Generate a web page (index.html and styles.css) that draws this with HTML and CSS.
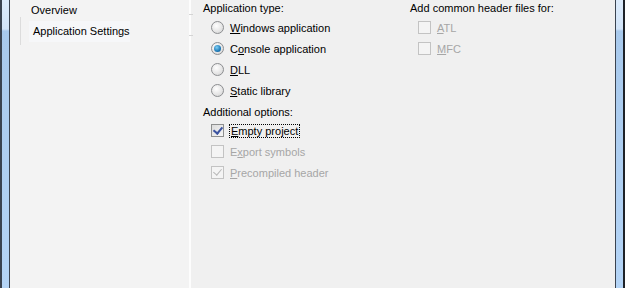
FILE: index.html
```html
<!DOCTYPE html>
<html lang="en">
<head>
    <meta charset="UTF-8">
    <title>Application Settings</title>
    <link rel="stylesheet" href="styles.css">
</head>
<body>
<div class="window">
    <div class="frame"></div>
    <ul class="nav">
        <li class="nav-item">Overview</li>
        <li class="nav-item cur">Application Settings</li>
    </ul>
    <div class="split"></div>
    <div class="content">
        <div class="col">
            <div class="label">Application type:</div>
            <div class="opt"><span class="radio"></span><span><u>W</u>indows application</span></div>
            <div class="opt"><span class="radio on"></span><span>C<u>o</u>nsole application</span></div>
            <div class="opt"><span class="radio"></span><span><u>D</u>LL</span></div>
            <div class="opt"><span class="radio"></span><span><u>S</u>tatic library</span></div>
            <div class="label second">Additional options:</div>
            <div class="opt"><span class="check on"></span><span class="focus"><u>E</u>mpty project</span></div>
            <div class="opt off"><span class="check"></span><span>E<u>x</u>port symbols</span></div>
            <div class="opt off"><span class="check on"></span><span><u>P</u>recompiled header</span></div>
        </div>
        <div class="col">
            <div class="label">Add common header files for:</div>
            <div class="opt off"><span class="check"></span><span><u>A</u>TL</span></div>
            <div class="opt off"><span class="check"></span><span><u>M</u>FC</span></div>
        </div>
    </div>
    <div class="frame"></div>
</div>
</body>
</html>
```

FILE: styles.css
```css
* {margin:0; padding:0; list-style:none; box-sizing:border-box;}

body {font-family:"Liberation Sans", Arial, sans-serif; font-size:11px; color:#000; background:#f0f0f0;}

.window {display:flex; width:625px; height:288px;}

.frame {width:10px; border-left:2px solid #3a4350; border-right:1px solid #3a4350;
    background:linear-gradient(#dcebfb 0, #d2e4f8 29px, #a8c9ec 31px, #b4d4f6 100%);}
.window .frame:last-child {border-left:1px solid #3a4350; border-right:2px solid #1e2228;}

.nav {width:179px; background:#f3f3f3;}
.nav-item {height:21px; line-height:21px; padding-left:21px; white-space:nowrap;}
.nav-item.cur {margin-left:19px; padding-left:4px; width:101px; position:relative; background:#f6f7f9;}
.nav-item.cur:before {content:''; position:absolute; left:-9px; top:-4px; height:28px; border-left:1px solid #dcdcdc;}

.split {width:2px; background:#fdfdfd; position:relative;}
.split:before, .split:after {content:''; position:absolute; left:0; width:4px; border-top:1px solid #d4d4d4;}
.split:before {top:14px;}
.split:after {top:35px;}

.content {flex:1; background:#f0f0f0; display:grid; grid-template-columns:207px 1fr; padding:0 0 0 12px;}

.label {height:17px; line-height:17px; white-space:nowrap;}
.label.second {height:19px; padding-top:4px; line-height:15px;}

.opt {display:flex; align-items:center; height:21px; padding-left:8px; gap:6px; white-space:nowrap;}
.opt.off {color:#a6a6a6;}

.radio {width:13px; height:13px; border-radius:50%; border:1px solid #8c8e91;
    background:radial-gradient(circle at 40% 35%, #ffffff 0, #e6e6e6 55%, #cfcfcf 100%); position:relative;}
.radio.on:after {content:''; position:absolute; left:2px; top:2px; width:7px; height:7px; border-radius:50%;
    background:radial-gradient(circle at 40% 35%, #7fd0f5 0, #1f7bb8 60%, #0b4f86 100%);}

.check {width:13px; height:13px; border:1px solid #8e8f8f; background:linear-gradient(135deg, #dcdcdc, #f6f6f6); position:relative;}
.opt.off .check {border-color:#c3c3c3; background:#f4f4f4;}
.check.on:after {content:''; position:absolute; left:3px; top:0px; width:4px; height:7px;
    border-right:2px solid #3b53a0; border-bottom:2px solid #3b53a0; transform:rotate(40deg);}
.opt.off .check.on:after {border-color:#b8b8b8; border-width:1px;}

.focus {outline:1px dotted #000; outline-offset:0; padding:0 1px;}
```
